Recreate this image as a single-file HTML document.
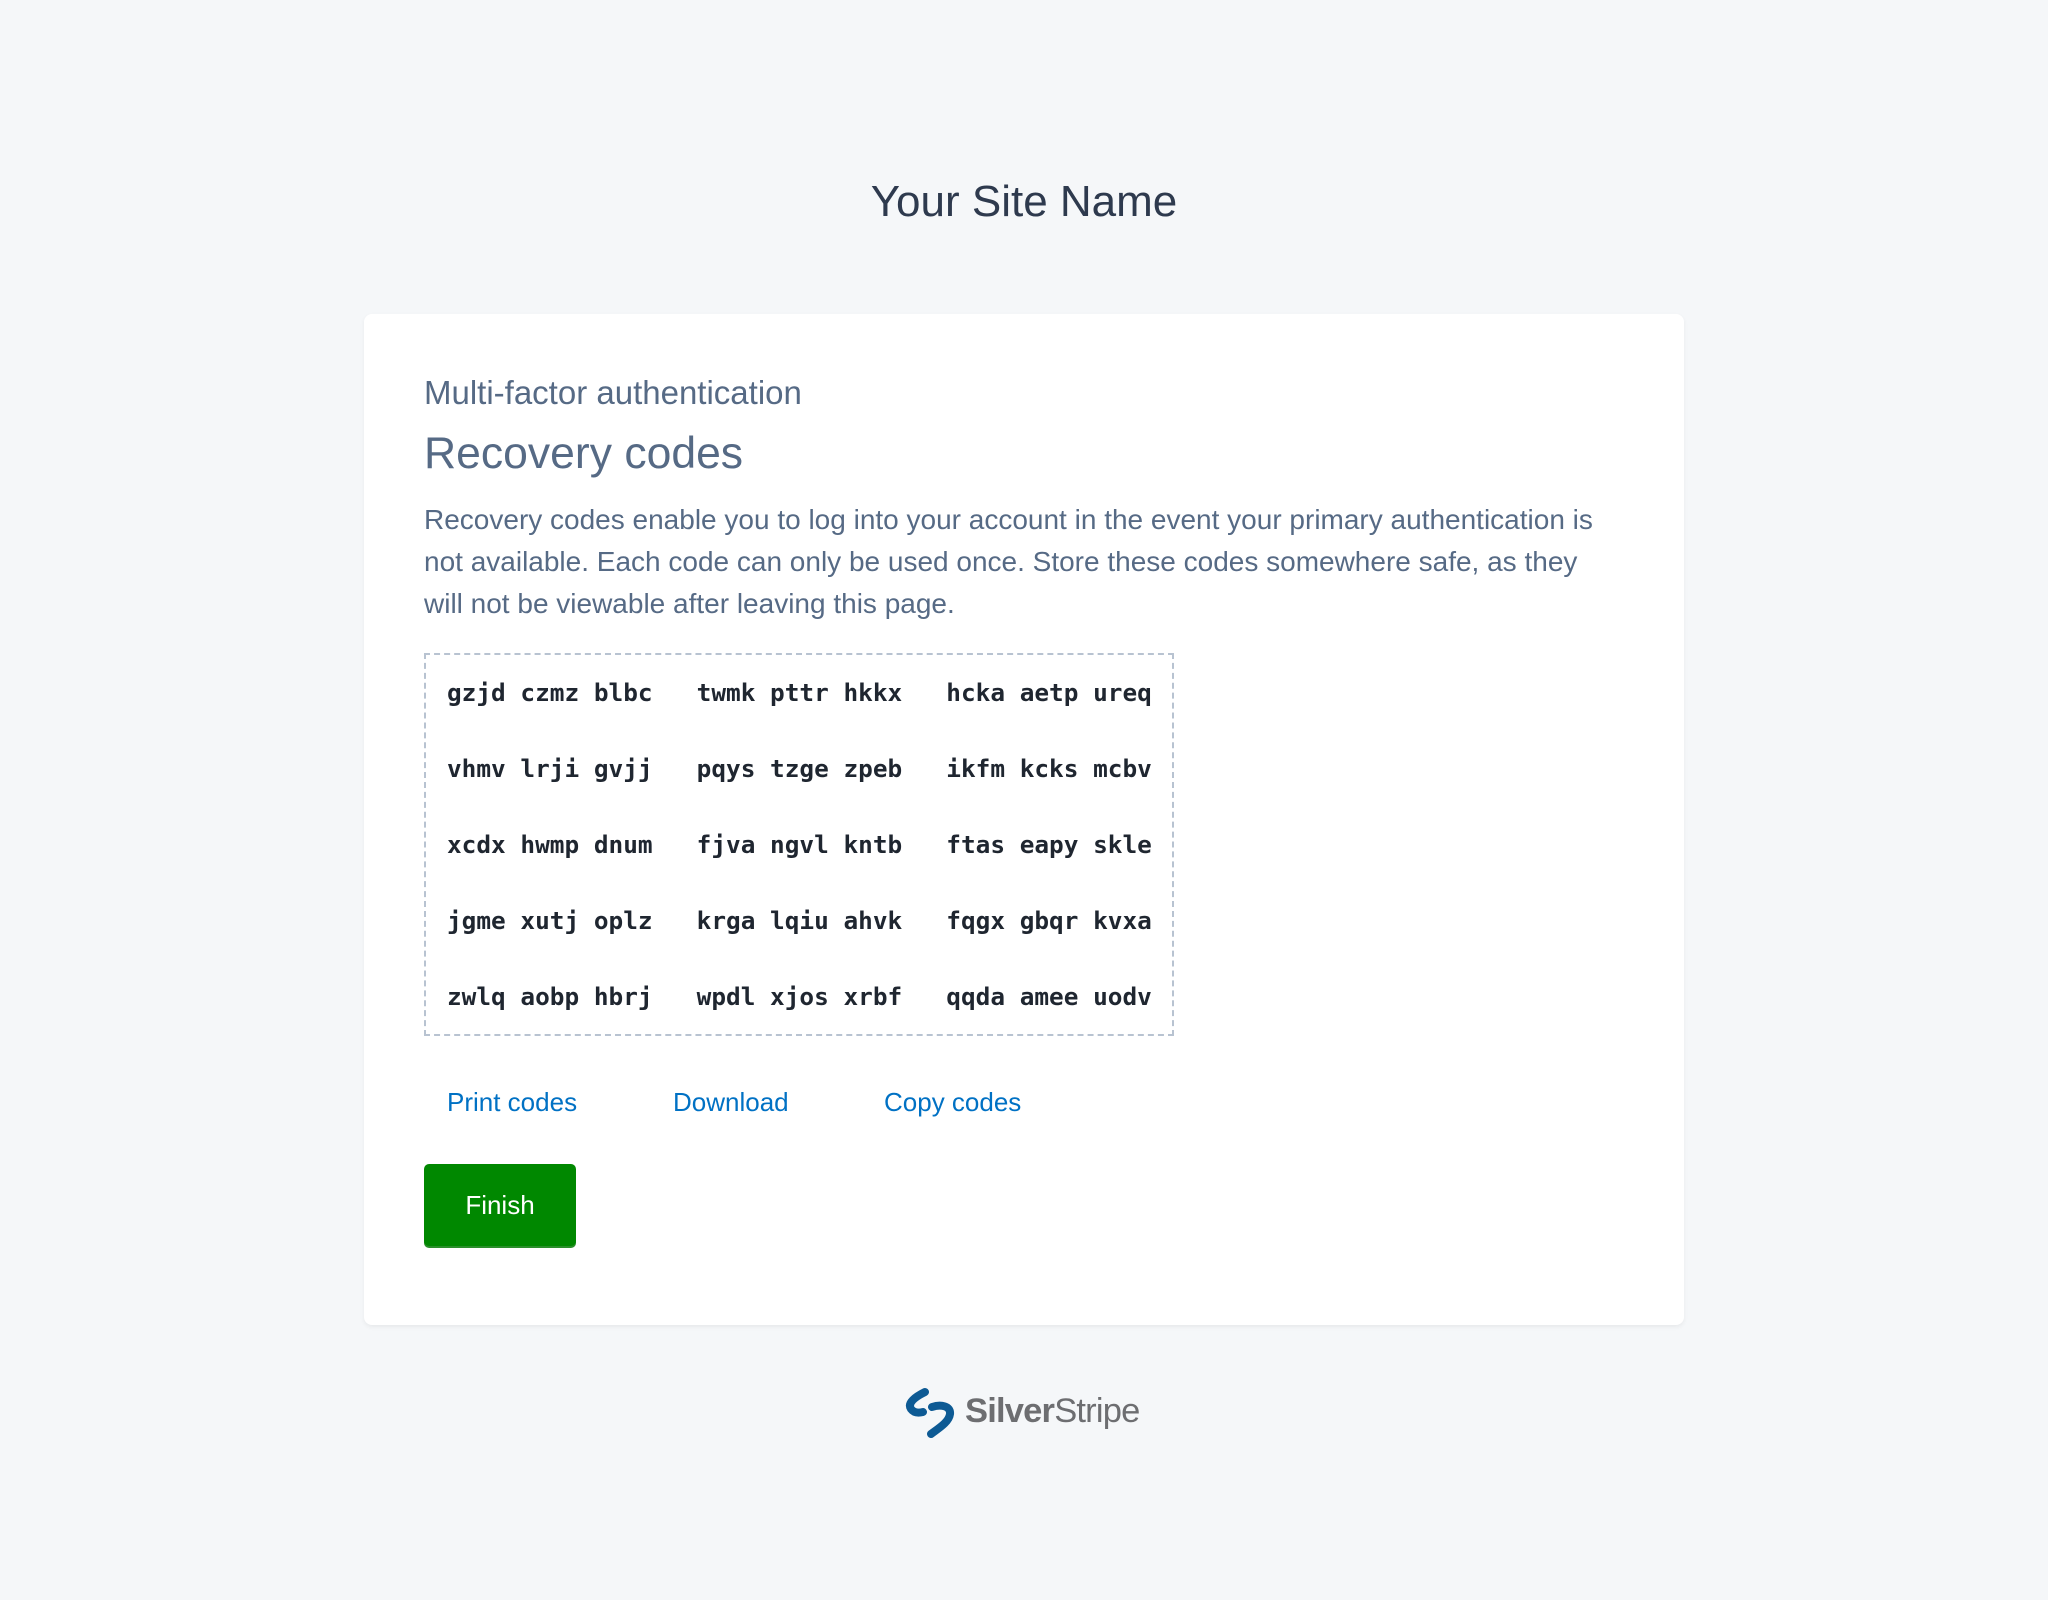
<!DOCTYPE html>
<html><head><meta charset="utf-8">
<style>
html,body{margin:0;padding:0;}
body{width:2048px;height:1600px;background:#f5f7f9;font-family:"Liberation Sans",Arial,sans-serif;position:relative;overflow:hidden;}
.site{position:absolute;left:0;width:2048px;top:174px;text-align:center;font-size:44px;color:#2e3a4e;line-height:56px;}
.card{position:absolute;left:364px;top:314px;width:1320px;height:1011px;background:#fff;border-radius:8px;box-shadow:0 2px 5px rgba(0,0,0,0.06);}
.t1{position:absolute;left:60px;top:59px;font-size:33px;color:#566a85;line-height:40px;}
.t2{position:absolute;left:60px;top:114px;font-size:44.5px;color:#566a85;line-height:52px;}
.p{position:absolute;left:60px;top:185px;width:1200px;font-size:28px;line-height:42px;color:#566a85;}
.codes{position:absolute;left:60px;top:339px;width:750px;height:383px;border:2px dashed #b8c3d1;box-sizing:border-box;}
.codes pre{margin:0;position:absolute;left:21px;top:0px;font-family:"DejaVu Sans Mono","Liberation Mono",monospace;font-weight:bold;font-size:24.4px;line-height:76px;color:#1f2630;}
.links a{position:absolute;top:770px;font-size:26px;color:#0071c4;text-decoration:none;line-height:36px;}
.btn{position:absolute;left:60px;top:850px;width:152px;height:82px;background:#008800;border-radius:5px;color:#fff;font-size:26px;line-height:82px;text-align:center;box-shadow:0 2px 0 #2a8f2a;}
.logo{position:absolute;left:905px;top:1386px;}
.logotext{position:absolute;left:965px;top:1390px;font-size:34.5px;color:#6d6e71;line-height:42px;letter-spacing:-0.8px;}
</style></head><body>
<div class="site">Your Site Name</div>
<div class="card">
<div class="t1">Multi-factor authentication</div>
<div class="t2">Recovery codes</div>
<div class="p">Recovery codes enable you to log into your account in the event your primary authentication is not available. Each code can only be used once. Store these codes somewhere safe, as they will not be viewable after leaving this page.</div>
<div class="codes"><pre>gzjd czmz blbc   twmk pttr hkkx   hcka aetp ureq
vhmv lrji gvjj   pqys tzge zpeb   ikfm kcks mcbv
xcdx hwmp dnum   fjva ngvl kntb   ftas eapy skle
jgme xutj oplz   krga lqiu ahvk   fqgx gbqr kvxa
zwlq aobp hbrj   wpdl xjos xrbf   qqda amee uodv</pre></div>
<div class="links"><a style="left:83px">Print codes</a><a style="left:309px">Download</a><a style="left:520px">Copy codes</a></div>
<div class="btn">Finish</div>
</div>
<svg class="logo" width="52" height="52" viewBox="0 0 52 52">
<path d="M20 6 C10 11 2 17 6 23 C9 27 14 27 18 26" fill="none" stroke="#0d5a94" stroke-width="8" stroke-linecap="round"/>
<path d="M27 21 C36 18 46 20 45 28 C44 36 34 42 26 48" fill="none" stroke="#0d5a94" stroke-width="8" stroke-linecap="round"/>
</svg>
<div class="logotext"><b>Silver</b>Stripe</div>
</body></html>
